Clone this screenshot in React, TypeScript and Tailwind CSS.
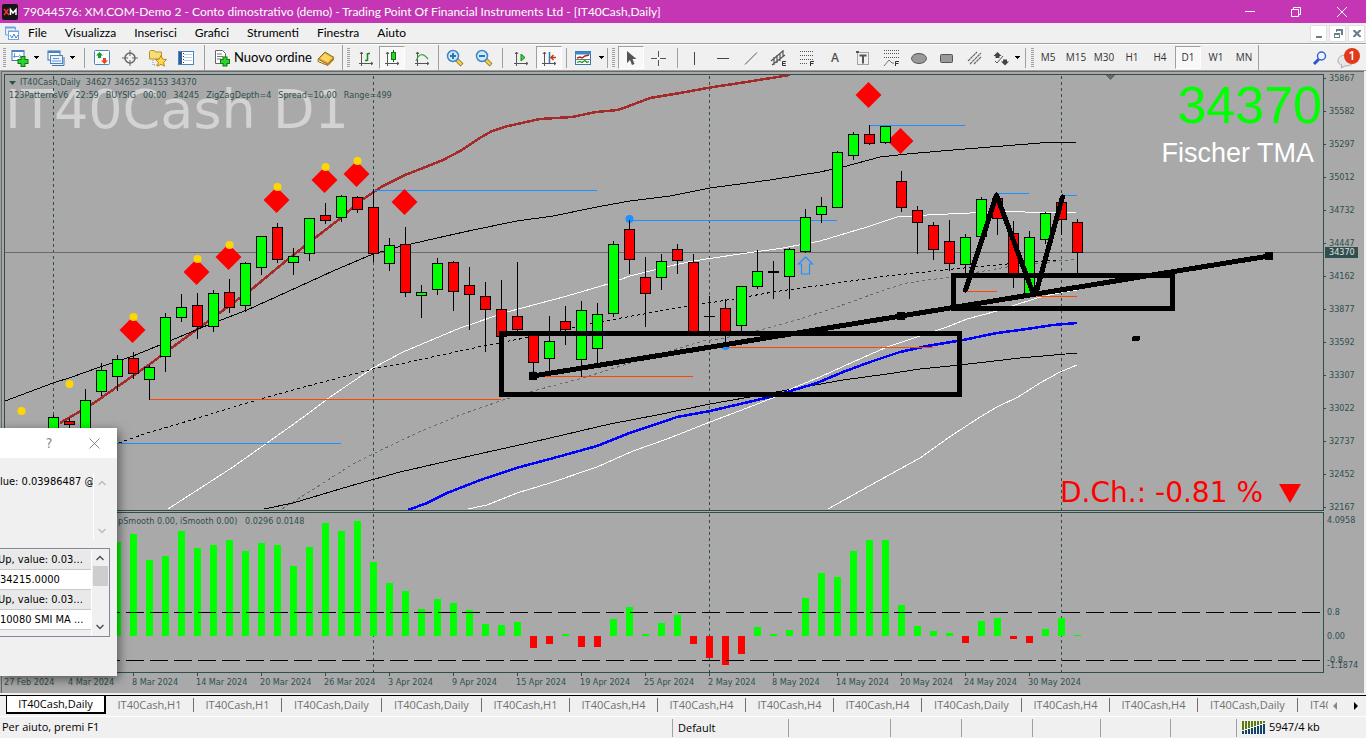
import React from "react";

type Candle = [high: number, top: number, bottom: number, low: number, kind: "g" | "r" | "d"];

const CANDLES: Candle[] = [
  [415, 417, 440, 445, "g"], [418, 421, 424, 428, "r"], [389, 400, 440, 445, "g"],
  [363, 370, 391, 395, "g"], [355, 359, 376, 390, "g"], [352, 358, 373, 378, "r"],
  [365, 367, 379, 399, "g"], [313, 317, 356, 371, "g"], [294, 307, 317, 321, "g"],
  [293, 305, 326, 338, "r"], [290, 293, 326, 331, "g"], [279, 292, 307, 312, "r"],
  [262, 263, 305, 311, "g"], [236, 236, 267, 274, "g"], [223, 227, 259, 262, "r"],
  [248, 256, 262, 274, "g"], [218, 218, 253, 260, "g"], [203, 215, 220, 223, "r"],
  [195, 196, 217, 221, "g"], [196, 197, 209, 212, "r"], [189, 207, 253, 261, "r"],
  [238, 245, 263, 270, "g"], [227, 244, 292, 296, "r"], [285, 292, 295, 317, "g"],
  [258, 263, 289, 294, "g"], [261, 262, 291, 310, "r"], [267, 285, 294, 329, "r"],
  [282, 296, 309, 351, "r"], [280, 309, 336, 336, "r"], [262, 316, 329, 331, "r"],
  [334, 335, 362, 373, "r"], [316, 341, 358, 373, "g"], [306, 321, 329, 344, "r"],
  [301, 310, 359, 376, "g"], [303, 314, 348, 364, "g"], [241, 244, 313, 316, "g"],
  [220, 229, 259, 273, "r"], [257, 277, 293, 326, "r"], [254, 261, 277, 289, "g"],
  [244, 249, 260, 273, "r"], [254, 262, 333, 333, "r"], [296, 316, 316, 331, "d"],
  [299, 308, 332, 346, "r"], [286, 286, 325, 331, "g"], [250, 271, 286, 288, "g"],
  [261, 271, 272, 298, "d"], [248, 249, 276, 298, "g"], [209, 217, 251, 252, "g"],
  [197, 206, 214, 222, "g"], [151, 152, 207, 207, "g"], [132, 134, 155, 159, "g"],
  [125, 134, 143, 144, "r"], [126, 126, 142, 143, "g"], [171, 181, 207, 211, "r"],
  [206, 210, 222, 253, "r"], [222, 225, 249, 259, "r"], [220, 241, 263, 270, "r"],
  [234, 237, 264, 273, "g"], [197, 199, 236, 236, "g"], [195, 198, 218, 234, "r"],
  [221, 233, 273, 287, "r"], [231, 237, 293, 293, "g"], [212, 213, 239, 243, "g"],
  [195, 202, 219, 234, "r"], [219, 222, 252, 273, "r"],
];

// signed bar heights of the oscillator, positive is up
const BARS = [
  90, 90, 90, 92, 94, 102, 76, 80, 105, 88, 91, 96, 85, 93, 91, 70, 89, 113, 105, 115, 74, 53,
  45, 27, 37, 33, 26, 12, 11, 14, -12, -8, 2, -11, -11, 17, 29, 2, 13, 21, -8, -22, -29, -18, 9,
  2, 6, 38, 63, 59, 85, 96, 96, 31, 10, 5, 3, -7, 15, 18, -3, -7, 7, 18, 1,
];

const FIRST_X = 53;
const STEP = 16;
const ZERO_Y = 636;
const GRID_X = [53, 373, 709, 1061];

const CURVES = [
  {
    color: "#a52a2a",
    width: 2.5,
    points:
      "60,423 91,405 127,380 150,364 170,349 203,325 233,303 252,289 287,260 315,238 337,221 363,199 383,186 405,175 423,168 443,160 462,150 478,139 492,131 508,126 540,119 572,117 596,112 618,110 629,106 650,98 680,93 713,87 740,83 790,75",
  },
  {
    color: "#000",
    width: 1,
    points:
      "5,401 53,383 69,378 100,367 133,356 160,345 203,327 247,310 287,292 333,271 373,254 398,247 437,238 473,230 517,221 553,216 597,207 630,201 670,196 710,188 740,184 770,180 820,172 843,167 880,157 907,154 953,150 1003,146 1040,143 1077,142",
  },
  {
    color: "#fff",
    width: 1,
    points:
      "168,509 233,467 267,443 298,421 333,395 373,368 403,352 460,328 507,312 567,296 608,284 630,276 670,266 693,261 740,254 783,248 820,241 867,227 897,217 927,215 970,213 1010,211 1040,213 1077,212",
  },
  {
    color: "#000",
    width: 1,
    dash: "3 3",
    points:
      "119,443 147,433 188,421 250,402 300,388 373,369 400,364 483,346 530,337 570,328 610,320 683,307 740,298 773,292 830,284 887,276 953,269 1007,264 1060,260",
  },
  {
    color: "#696969",
    width: 1,
    dash: "3 3",
    points:
      "282,509 320,485 353,464 377,452 417,433 460,415 503,400 533,391 583,378 630,363 670,351 703,341 720,339 760,330 797,320 837,307 887,289 907,283 950,277 1007,267 1077,259",
  },
  {
    color: "#000",
    width: 1,
    points:
      "264,509 293,503 350,486 400,472 483,453 533,442 610,424 657,415 710,404 750,397 787,390 843,380 887,374 920,369 960,365 1020,358 1077,353",
  },
  {
    color: "#fff",
    width: 1,
    points:
      "468,509 487,505 517,493 550,483 597,467 633,451 667,439 710,422 747,408 775,397 793,388 820,377 853,362 887,347 920,336 947,327 967,319 997,311 1012,306 1037,298 1063,292 1077,290",
  },
  {
    color: "#fff",
    width: 1,
    points: "828,509 853,495 880,480 920,458 948,438 977,419 997,407 1018,397 1040,383 1060,372 1077,365",
  },
  {
    color: "#00f",
    width: 2.5,
    points:
      "408,510 427,503 447,493 483,479 520,467 550,459 597,446 627,434 677,417 710,411 770,397 787,392 817,383 843,372 870,362 900,352 927,346 963,340 997,333 1020,330 1053,325 1077,323",
  },
];

// [x1, x2, y]
const BLUE_LEVELS = [[117, 341, 443], [373, 597, 190], [629, 837, 220], [869, 965, 125], [997, 1029, 193], [1061, 1077, 195]];
const ORANGE_LEVELS = [[149, 501, 399], [533, 693, 376], [725, 933, 347], [965, 997, 291], [1037, 1077, 296]];
const DIAMONDS = [[132, 330], [196, 272], [228, 257], [276, 200], [324, 180], [356, 174], [404, 202], [868, 95], [900, 141]];
const GOLD_DOTS = [[21, 411], [69, 384], [133, 317], [197, 259], [229, 245], [277, 187], [325, 167], [357, 161]];
const BLUE_DOTS = [[629, 219], [725, 346], [533, 375]];

const PRICES = [35867, 35582, 35297, 35012, 34732, 34447, 34162, 33877, 33592, 33307, 33022, 32737, 32452, 32167];
const DATES = [
  "27 Feb 2024", "4 Mar 2024", "8 Mar 2024", "14 Mar 2024", "20 Mar 2024", "26 Mar 2024", "3 Apr 2024", "9 Apr 2024",
  "15 Apr 2024", "19 Apr 2024", "25 Apr 2024", "2 May 2024", "8 May 2024", "14 May 2024", "20 May 2024", "24 May 2024",
  "30 May 2024",
];
const SIGNAL = ["123PatternsV6", "22:59", "BUYSIG", "00:00", "34245", "ZigZagDepth=4", "Spread=10.00", "Range=499"];
const TABS = ["H1", "H1", "Daily", "Daily", "H1", "H4", "H4", "H4", "H4", "Daily", "H4", "H4", "Daily"];

const GridLines = () => (
  <>
    {GRID_X.map((x) => (
      <line key={x} x1={x + 0.5} x2={x + 0.5} y1={76} y2={672} stroke="#2f4f4f" strokeDasharray="3 3" />
    ))}
  </>
);

const PriceChart = () => (
  <svg className="absolute inset-0 h-full w-full" shapeRendering="crispEdges" aria-hidden="true">
    <g transform="translate(-5 -75)">
      <GridLines />
      <line x1={5} x2={1323} y1={252.5} y2={252.5} stroke="#696969" />
      <path d="M1105 75h11l-5.500 5z" fill="#696969" />
      {CURVES.map((c) => (
        <polyline
          key={c.points}
          points={c.points}
          fill="none"
          stroke={c.color}
          strokeWidth={c.width}
          strokeDasharray={c.dash}
        />
      ))}
      {BLUE_LEVELS.map(([x1, x2, y]) => (
        <rect key={x1} x={x1} y={y} width={x2 - x1} height={1} fill="#1e90ff" />
      ))}
      {ORANGE_LEVELS.map(([x1, x2, y]) => (
        <rect key={x1} x={x1} y={y} width={x2 - x1} height={1} fill="#ff4500" />
      ))}
      <g shapeRendering="auto">
        {BLUE_DOTS.map(([x, y]) => (
          <circle key={x} cx={x + 0.5} cy={y} r={4} fill="#1e90ff" />
        ))}
        {DIAMONDS.map(([x, y]) => (
          <path key={x} d={`M${x + 0.5} ${y - 13}l13 13l-13 13l-13 -13z`} fill="#f00" />
        ))}
        {GOLD_DOTS.map(([x, y]) => (
          <circle key={x} cx={x + 0.5} cy={y} r={4} fill="#ffd700" />
        ))}
        <path d="M805.500 257l7 7h-3v10h-8v-10h-3z" fill="none" stroke="#1e90ff" strokeWidth={1.2} />
      </g>
      {CANDLES.map(([high, top, bottom, low, kind], i) => {
        const x = FIRST_X + i * STEP;
        return (
          <g key={x}>
            <rect x={x} y={high} width={1} height={low - high + 1} />
            <rect x={x - 5} y={top} width={11} height={bottom - top + 1} />
            {kind !== "d" && (
              <rect
                x={x - 4}
                y={top + 1}
                width={9}
                height={bottom - top - 1}
                fill={kind === "g" ? "#0f0" : "#f00"}
              />
            )}
          </g>
        );
      })}
      <g fill="none" stroke="#000">
        <rect x={501.5} y={333.5} width={458} height={61} strokeWidth={5} />
        <rect x={953.5} y={275.5} width={219} height={33} strokeWidth={5} />
        <path d="M533 376L1269 256" strokeWidth={5} />
        <path d="M965.500 290L996.500 195L1033 293L1036 293L1062.500 197" strokeWidth={5} strokeLinecap="round" strokeLinejoin="round" />
      </g>
      <rect x={529} y={372} width={8} height={8} />
      <rect x={897} y={312} width={8} height={8} />
      <rect x={1265} y={252} width={8} height={8} />
      <rect x={1132} y={336} width={8} height={5} rx={2} />
    </g>
  </svg>
);

const Oscillator = () => (
  <svg className="absolute inset-0 h-full w-full" shapeRendering="crispEdges" aria-hidden="true">
    <g transform="translate(-5 -513)">
      <GridLines />
      {BARS.map((v, i) => (
        <rect
          key={i}
          x={FIRST_X + i * STEP - 3}
          y={v > 0 ? ZERO_Y - v : ZERO_Y}
          width={7}
          height={Math.abs(v)}
          fill={v > 0 ? "#0f0" : "#f00"}
        />
      ))}
      <line x1={6} x2={1320} y1={612.5} y2={612.5} stroke="#000" strokeDasharray="18 6" />
      <line x1={6} x2={1320} y1={660.5} y2={660.5} stroke="#000" strokeDasharray="18 6" />
    </g>
  </svg>
);

const Icon = ({ children, size = 18 }: { children: React.ReactNode; size?: number }) => (
  <svg width={size} height={size} viewBox={`0 0 ${size} ${size}`} fill="none" aria-hidden="true" className="shrink-0">
    {children}
  </svg>
);

const Tool = ({
  label,
  width = "w-7",
  pressed,
  children,
}: {
  label: string;
  width?: string;
  pressed?: boolean;
  children: React.ReactNode;
}) => (
  <div className={`flex h-full shrink-0 items-center justify-center ${width}`}>
    <button
      type="button"
      aria-label={label}
      aria-pressed={pressed}
      className={
        pressed
          ? "flex h-[23px] w-[26px] items-center justify-center border border-[#a0a0a0] border-r-white border-b-white bg-[#f8f8f8]"
          : "flex h-[23px] items-center justify-center"
      }
    >
      {children}
    </button>
  </div>
);

const Caret = ({ label }: { label: string }) => (
  <button type="button" aria-label={label} className="flex w-2 shrink-0 items-center justify-center">
    <svg width="5" height="3" shapeRendering="crispEdges" aria-hidden="true">
      <path d="M0 0h5L2.500 3z" fill="#000" />
    </svg>
  </button>
);

const Sep = ({ width }: { width: string }) => (
  <div className={`flex h-full shrink-0 items-center justify-center ${width}`}>
    <span className="h-5 w-px bg-[#a0a0a0]" />
  </div>
);

const Edge = () => <div className="h-full w-px shrink-0 bg-[#a0a0a0]" />;

const Grip = ({ width }: { width: string }) => (
  <div className={`flex h-full shrink-0 items-center justify-center ${width}`}>
    <svg width="3" height="19" shapeRendering="crispEdges" aria-hidden="true">
      <path d="M1.500 0v19" stroke="#a0a0a0" strokeWidth="3" strokeDasharray="1 1" />
    </svg>
  </div>
);

const Axes = () => <path d="M4.500 3v14M2 14.500h14M3 5l1.500-2L6 5M14 13l2 1.500-2 1.500" stroke="#555" />;

const Magnifier = ({ plus }: { plus?: boolean }) => (
  <Icon>
    <path d="M10.500 10.500l5.500 5.500" stroke="#8a6d1a" strokeWidth="4" />
    <path d="M10.500 10.500l5 5" stroke="#f3cf4a" strokeWidth="2.500" />
    <circle cx="7" cy="7" r="5.500" fill="#cfe9fb" stroke="#3f86c4" strokeWidth="1.500" />
    <path d={plus ? "M4 7h6M7 4v6" : "M4 7h6"} stroke="#2f75b5" strokeWidth="2" />
  </Icon>
);

const Toolbar = () => (
  <div role="toolbar" className="flex h-[26px] items-center overflow-hidden border-t border-white bg-[#f0f0f0]">
    <Grip width="w-2" />
    <Tool label="Nuovo grafico" width="w-6">
      <Icon>
        <rect x="1" y="1.500" width="12" height="10" fill="#fff" stroke="#3f74ad" />
        <path d="M1 2h12" stroke="#4a83bd" strokeWidth="2" />
        <path d="M3.500 4v5M2 7.500h6M8 6l2 1.500L8 9" stroke="#6b9bd0" />
        <path d="M12 7v11M6.500 12.500h11" stroke="#0a7a12" strokeWidth="5" />
        <path d="M12 8v9M7.500 12.500h9" stroke="#2fd02f" strokeWidth="3" />
      </Icon>
    </Tool>
    <Caret label="Altri grafici" />
    <div className="w-1 shrink-0" />
    <Tool label="Profili" width="w-6">
      <Icon>
        <rect x="1" y="2" width="12" height="9" fill="#fff" stroke="#3f74ad" />
        <path d="M1 3h12" stroke="#4a83bd" strokeWidth="2" />
        <path d="M5 16.500h12V8" stroke="#3f74ad" />
        <rect x="3.500" y="6.500" width="12" height="8" fill="#eaf3fc" stroke="#4a83bd" />
        <path d="M5 12h9M6 9.500h6" stroke="#6b9bd0" />
      </Icon>
    </Tool>
    <Caret label="Elenco profili" />
    <Sep width="w-4" />
    <Tool label="Market Watch" width="w-5">
      <Icon>
        <rect x="1.500" y="1.500" width="15" height="14" rx="1" fill="#fff" stroke="#4a83bd" />
        <path d="M4 5h10M4 9h10M4 13h10" stroke="#c5dcf2" strokeDasharray="1 1" />
        <path d="M6.500 3l3.500 3.500H8V9H5V6.500H3z" fill="#169a22" />
        <path d="M11.500 15l3.500-3.500h-2V9h-3v2.500H8z" fill="#e5481c" />
      </Icon>
    </Tool>
    <Tool label="Finestra dati" width="w-9">
      <Icon>
        <circle cx="9" cy="9" r="5" stroke="#666" strokeWidth="1.500" />
        <path d="M9 1v6M9 11v6M1 9h6M11 9h6" stroke="#666" />
      </Icon>
    </Tool>
    <Tool label="Navigatore" width="w-5">
      <Icon>
        <path d="M.5 10V2.500l1-1h4l1 1.500h6V10z" fill="#f7dc7a" stroke="#b99325" />
        <path d="M4 11v5h4" stroke="#888" strokeDasharray="1 1" />
        <path d="M12 6.500l1.700 3.600 3.800.5-2.800 2.700.7 3.900-3.400-1.900-3.400 1.900.7-3.900-2.800-2.700 3.800-.5z" fill="#ffd84d" stroke="#b98a12" />
      </Icon>
    </Tool>
    <Tool label="Terminale" width="w-9">
      <Icon>
        <rect x="1.500" y="2.500" width="15" height="13" fill="#fff" stroke="#4a83bd" />
        <path d="M3.500 3v12" stroke="#2c5d94" strokeWidth="3" />
        <path d="M7 5.500h8M7 8.500h8M7 11.500h8" stroke="#b5d0ea" />
        <path d="M6.500 4v10" stroke="#333" strokeDasharray="1 2" />
      </Icon>
    </Tool>
    <Edge />
    <button type="button" className="flex h-full w-[105px] shrink-0 items-center gap-[3px] pl-2 font-['Lato','Open_Sans',sans-serif] text-[13px] whitespace-nowrap text-black">
      <Icon>
        <path d="M2.500 1.500h7l3 3v10h-10z" fill="#fff" stroke="#666" />
        <path d="M4 5h5M4 7.500h6M4 10h4" stroke="#777" />
        <path d="M12 7.500v10M7 12.500h10" stroke="#0a7a12" strokeWidth="5" />
        <path d="M12 8.500v8M8 12.500h8" stroke="#2fd02f" strokeWidth="3" />
      </Icon>
      Nuovo ordine
    </button>
    <Tool label="MetaEditor" width="w-8">
      <Icon>
        <path d="M1 10l7-7 9 5.500-6 7z" fill="#e2a526" stroke="#9a6a10" />
        <path d="M3 9.500L8 4.500l7 4.300-4 4.500z" fill="#f8d568" />
        <path d="M1 10.500v2l10 4 6-6.500" stroke="#9a6a10" />
      </Icon>
    </Tool>
    <Edge />
    <Grip width="w-[11px]" />
    <Tool label="Grafico a barre" width="w-6">
      <Icon>
        <Axes />
        <path d="M10.500 4v8M8 11.500h2M11 4.500h2" stroke="#128a1c" strokeWidth="1.500" />
      </Icon>
    </Tool>
    <Tool label="Candele giapponesi" pressed>
      <Icon>
        <Axes />
        <path d="M10.500 1v12" stroke="#0a6a12" />
        <rect x="8.500" y="3.500" width="4" height="7" fill="#2fd02f" stroke="#0a7a12" />
      </Icon>
    </Tool>
    <Tool label="Grafico a linea" width="w-8">
      <Icon>
        <Axes />
        <path d="M3 12c3-8 7-8 12-2" stroke="#3aa845" strokeWidth="1.200" />
      </Icon>
    </Tool>
    <Edge />
    <Tool label="Ingrandisci" width="w-8">
      <Magnifier plus />
    </Tool>
    <Tool label="Riduci" width="w-[25px]">
      <Magnifier />
    </Tool>
    <Sep width="w-3" />
    <Tool label="Scorrimento automatico" width="w-[26px]">
      <Icon>
        <Axes />
        <path d="M9 5l4 3.500L9 12z" fill="#3fd04a" stroke="#128a1c" />
      </Icon>
    </Tool>
    <Tool label="Spostamento grafico" width="w-[29px]" pressed>
      <Icon>
        <Axes />
        <path d="M9.500 3v11" stroke="#2f75b5" strokeWidth="1.500" />
        <path d="M11 8.500h5M13.500 6L11 8.500l2.500 2.500" stroke="#c23a12" strokeWidth="1.500" />
      </Icon>
    </Tool>
    <Sep width="w-1.5" />
    <Tool label="Modelli" width="w-7">
      <Icon>
        <rect x="1.500" y="2.500" width="15" height="13" fill="#fff" stroke="#3f74ad" />
        <path d="M1 4h16" stroke="#3f86c4" strokeWidth="3" />
        <path d="M3 9l3-1 2 1 3-2 4-1" stroke="#a03018" strokeWidth="1.500" />
        <path d="M3 13.500l3-1 2 1 3-2 2 2 2-1" stroke="#169a22" strokeWidth="1.200" />
        <path d="M2 10.500h14" stroke="#777" />
      </Icon>
    </Tool>
    <Caret label="Elenco modelli" />
    <Sep width="w-[5px]" />
    <Grip width="w-[7px]" />
    <Tool label="Cursore" pressed>
      <Icon>
        <path d="M5 2v12l3-3 2 5 2.500-1-2-5h4z" fill="#555" />
      </Icon>
    </Tool>
    <Tool label="Mirino">
      <Icon>
        <path d="M8.500 2v6M8.500 11v6M1 9.500h6M10 9.500h6" stroke="#555" />
      </Icon>
    </Tool>
    <Sep width="w-2" />
    <Tool label="Linea verticale">
      <Icon>
        <path d="M8.500 3v13" stroke="#444" />
      </Icon>
    </Tool>
    <Tool label="Linea orizzontale">
      <Icon>
        <path d="M3 9.500h12" stroke="#444" />
      </Icon>
    </Tool>
    <Tool label="Trendline">
      <Icon>
        <path d="M3 15.500L15 3.500" stroke="#555" />
      </Icon>
    </Tool>
    <Tool label="Canale equidistante">
      <Icon>
        <path d="M1 12L13 2M2 16L15 6M4 8v8M7 6v8M10 4v8M13 1v7" stroke="#555" strokeWidth="1.200" />
        <path d="M16 12.500h-3.500v4H16M12.500 14.500h3" stroke="#333" />
      </Icon>
    </Tool>
    <Tool label="Fibonacci">
      <Icon>
        <path d="M2 2.500h14M2 6.500h14M2 10.500h14M2 14.500h8" stroke="#555" strokeDasharray="1 1" />
        <path d="M12.500 17v-4.500H16M12.500 14.500h3" stroke="#333" />
      </Icon>
    </Tool>
    <Tool label="Testo">
      <span className="text-[12px] font-semibold text-[#555]">A</span>
    </Tool>
    <Tool label="Etichetta">
      <Icon>
        <rect x="3.500" y="3.500" width="11" height="12" stroke="#555" strokeDasharray="1 1" />
        <path d="M5.500 6.500h7M9 6.500v8" stroke="#555" strokeWidth="2" />
        <path d="M2 2h3v2H2z" fill="#555" />
      </Icon>
    </Tool>
    <Tool label="Espansione Fibonacci">
      <Icon>
        <path d="M2 1.500h15M2 4.500h15M2 8.500h15" stroke="#555" strokeDasharray="1 1" />
        <path d="M2 17l5-6 3 3h2" stroke="#777" />
        <path d="M13.500 17v-4.500H17M13.500 14.500h3" stroke="#333" />
      </Icon>
    </Tool>
    <Tool label="Ellisse">
      <Icon>
        <ellipse cx="9" cy="9.500" rx="7.500" ry="5" fill="#999" stroke="#555" />
      </Icon>
    </Tool>
    <Tool label="Rettangolo">
      <Icon>
        <rect x="2.500" y="5.500" width="12" height="8" rx="1" fill="#999" stroke="#555" />
      </Icon>
    </Tool>
    <Tool label="Canale">
      <Icon>
        <path d="M2 12L11 3M4 15L15 4M8 15l7-7" stroke="#666" strokeWidth="1.200" strokeDasharray="3 .5" />
      </Icon>
    </Tool>
    <Tool label="Frecce" width="w-6">
      <Icon>
        <path d="M5.500 3l4 4h-2v2h-4V7h-2zM13 16.500l-4-4h2v-2h4v2h2z" fill="#444" />
        <path d="M3 12l2 2 6-7" stroke="#555" />
      </Icon>
    </Tool>
    <Caret label="Elenco frecce" />
    <Sep width="w-[9px]" />
    <Grip width="w-1" />
    {["M5", "M15", "M30", "H1", "H4", "D1", "W1", "MN"].map((tf) => (
      <Tool key={tf} label={tf} pressed={tf === "D1"}>
        <span className="text-[10px] text-[#333]">{tf}</span>
      </Tool>
    ))}
    <Edge />
    <button type="button" aria-label="Cerca" className="ml-auto shrink-0 pr-2">
      <Icon size={16}>
        <path d="M7 9l-5 5" stroke="#2f55c4" strokeWidth="3" />
        <circle cx="9.500" cy="6" r="4" fill="#eef5ff" stroke="#3a66d0" strokeWidth="1.500" />
      </Icon>
    </button>
    <button type="button" aria-label="Notifiche" className="relative mr-1.5 h-6 w-6 shrink-0">
      <svg width="24" height="24" aria-hidden="true">
        <path d="M2 15c0-4 3-6 8-6s8 3 8 6-4 5-9 5l-4 2 1-3c-3-1-4-2-4-4z" fill="#e4e4ea" stroke="#aaa" />
        <circle cx="16" cy="10" r="8" fill="#e03a1c" />
      </svg>
      <span className="absolute top-0.5 left-3 w-2 text-center text-[12px] leading-4 font-semibold text-white">1</span>
    </button>
  </div>
);

const TitleBar = () => (
  <header className="flex h-[23px] items-center bg-[#c436b3] font-['Lato','Open_Sans',sans-serif] text-[12px] text-white">
    <svg width="16" height="16" className="ml-0.5 shrink-0" aria-hidden="true">
      <rect width="16" height="16" rx="2" fill="#151515" />
      <path d="M2 5l5 6M6.500 5L2 11" stroke="#e33" strokeWidth="1.500" />
      <path d="M8.500 11V5.500L11 9l3-3.500V11" fill="none" stroke="#fff" strokeWidth="1.500" />
    </svg>
    <h1 className="ml-[5px] truncate">
      79044576: XM.COM-Demo 2 - Conto dimostrativo (demo) - Trading Point Of Financial Instruments Ltd - [IT40Cash,Daily]
    </h1>
    <div className="ml-auto flex shrink-0 pr-px">
      <button type="button" aria-label="Riduci a icona" className="flex h-[23px] w-[46px] items-center justify-center">
        <svg width="10" height="10"><path d="M0 4.500h10" stroke="#fff" /></svg>
      </button>
      <button type="button" aria-label="Ripristina" className="flex h-[23px] w-[46px] items-center justify-center">
        <svg width="10" height="10" fill="none" stroke="#fff"><path d="M.5 2.500h7v7h-7zM2.500 2.500v-2h7v7h-2" /></svg>
      </button>
      <button type="button" aria-label="Chiudi" className="flex h-[23px] w-[46px] items-center justify-center">
        <svg width="10" height="10"><path d="M0 0l10 10M10 0L0 10" stroke="#fff" /></svg>
      </button>
    </div>
  </header>
);

const MENU = ["File", "Visualizza", "Inserisci", "Grafici", "Strumenti", "Finestra", "Aiuto"];

const MenuBar = () => (
  <nav className="flex h-[21px] items-center border-b border-[#a0a0a0] font-['Lato','Open_Sans',sans-serif] text-[12px] text-black">
    <svg width="16" height="16" className="mr-2 ml-1 shrink-0" fill="none" aria-hidden="true">
      <path d="M1 2.500h10M4 6.500h11" stroke="#6da3e0" strokeWidth="2" />
      <path d="M1.500 2v8H4M11.500 2v3" stroke="#6da3e0" />
      <rect x="4.500" y="6.500" width="10" height="8" fill="#fff" stroke="#6da3e0" />
      <path d="M6 10l2 3 2-4 2 4 2-3" stroke="#3f86c4" />
    </svg>
    <div className="flex gap-[18px]">
      {MENU.map((item) => (
        <button key={item} type="button">
          {item}
        </button>
      ))}
    </div>
    <div className="mr-px ml-auto flex gap-0.5">
      {[
        ["Riduci grafico", "M2 8h6v2H2z"],
        ["Ripristina grafico", "M3 1h7v6H8V3H4v1H3zM1 5h6v5H1zM2 7v2h4V7z"],
        ["Chiudi grafico", "M1 2h2l2 2 2-2h2v1L6.500 5.500 9 8v1H7L5 7 3 9H1V8l2.500-2.500L1 3z"],
      ].map(([label, d]) => (
        <button
          key={label}
          type="button"
          aria-label={label}
          className="flex size-[17px] items-center justify-center border border-[#e0e0e0] bg-white"
        >
          <svg width="10" height="10"><path d={d} fill="#6a7f8c" fillRule="evenodd" /></svg>
        </button>
      ))}
    </div>
  </nav>
);

const Chevron = ({ up, color }: { up?: boolean; color: string }) => (
  <svg width="8" height="6" fill="none" aria-hidden="true">
    <path d={up ? "M.5 5L4 1.500 7.500 5" : "M.5 1L4 4.500 7.500 1"} stroke={color} strokeWidth="1.500" />
  </svg>
);

const DataDialog = () => (
  <section
    role="dialog"
    aria-label="Valori"
    className="absolute top-[357px] -left-px h-[248px] w-[117px] bg-[#f0f0f0] text-[11px] text-black shadow-[2px_3px_10px_rgba(0,0,0,0.5)]"
  >
    <div className="flex h-[30px] items-center bg-white pl-[45px] text-[#888]">
      <button type="button" aria-label="Aiuto" className="w-2 text-[14px]">?</button>
      <button type="button" aria-label="Chiudi" className="ml-9">
        <svg width="11" height="11"><path d="M.5.5l10 10M10.500.5l-10 10" stroke="#888" /></svg>
      </button>
    </div>
    <div className="flex h-[90px] pt-4">
      <p className="h-4 w-[93px] whitespace-nowrap leading-4">lue: 0.03986487 @</p>
      <div className="flex h-[66px] w-4 flex-col items-center justify-between border-l border-white py-1.5">
        <Chevron up color="#bbb" />
        <Chevron color="#bbb" />
      </div>
    </div>
    <div className="flex h-[89px] w-[110px] border border-l-0 border-[#82879a] bg-[#f0f0f0] pt-px">
      <ul className="w-[91px] overflow-hidden whitespace-nowrap">
        <li className="-ml-0.5 h-5 border-b border-[#c8c8c8] bg-[#e9e9e9] leading-5">Up, value: 0.03...</li>
        <li className="h-5 border-b border-[#c8c8c8] bg-white leading-5">34215.0000</li>
        <li className="-ml-0.5 h-5 border-b border-[#c8c8c8] bg-[#e9e9e9] leading-5">Up, value: 0.03...</li>
        <li className="h-5 border-b border-[#c8c8c8] bg-white leading-5">10080 SMI MA ...</li>
      </ul>
      <div className="flex w-[17px] flex-col items-center border-l border-white pb-1.5">
        <span className="flex h-4 items-center"><Chevron up color="#505050" /></span>
        <span className="h-5 w-[15px] bg-[#cdcdcd]" />
        <span className="mt-auto flex"><Chevron color="#505050" /></span>
      </div>
    </div>
  </section>
);

const ChartWindow = () => (
  <main className="relative flex border-t border-l border-[#a0a0a0] bg-[#f0f0f0] font-['DejaVu_Sans_Condensed','DejaVu_Sans',sans-serif] text-[9px] text-[#2f4f4f]">
    <div className="flex min-w-0 flex-1 border-t border-l border-[#696969] bg-[#a9a9a9] pt-0.5 pl-0.5">
      <div className="min-w-0 flex-1">
        <div className="relative h-[437px] overflow-hidden border border-[#2f4f4f]">
          <p className="absolute top-[3px] left-0 font-['DejaVu_Sans'] text-[54px] leading-[64px] whitespace-nowrap text-[#d3d3d3]">
            IT40Cash D1
          </p>
          <PriceChart />
          <div className="relative pt-px pl-1 leading-[13px] whitespace-pre">
            <p className="flex items-center gap-1">
              <svg width="7" height="4" aria-hidden="true"><path d="M0 0h7L3.500 4z" fill="#2f4f4f" /></svg>
              IT40Cash,Daily{"  "}34627 34652 34153 34370
            </p>
            <p className="flex gap-[7px]">
              {SIGNAL.map((part) => (
                <span key={part}>{part}</span>
              ))}
            </p>
          </div>
          <p className="absolute top-0 right-px font-['Liberation_Sans'] text-[52px] leading-[60px] text-[#0f0]">34370</p>
          <p className="absolute top-[62px] right-[9px] font-['Liberation_Sans'] text-[27px] leading-[32px] text-white">Fischer TMA</p>
          <p className="absolute right-[22px] bottom-px flex items-center gap-4 font-['DejaVu_Sans'] text-[28px] leading-[32px] text-[#f00]">
            D.Ch.: -0.81 %
            <svg width="22" height="19" aria-hidden="true"><path d="M0 0h22L11 19z" fill="#f00" /></svg>
          </p>
        </div>
        <div className="relative mt-px h-[161px] overflow-hidden border border-[#2f4f4f]">
          <Oscillator />
          <p className="relative pl-[113px] leading-4 whitespace-pre">pSmooth 0.00, iSmooth 0.00){"   "}0.0296 0.0148</p>
        </div>
        <div className="flex h-5 overflow-hidden">
          {DATES.map((date) => (
            <div key={date} className="w-16 shrink-0 whitespace-nowrap">
              <div className="ml-px h-[3px] w-px bg-[#2f4f4f]" />
              <div className="leading-3">{date}</div>
            </div>
          ))}
        </div>
      </div>
      <div className="relative -mt-[4px] w-10 shrink-0 leading-4">
        <div className="h-[442px] overflow-hidden">
          {PRICES.map((price) => (
            <div key={price} className="flex h-[33px] items-start gap-[3px]">
              <span className="mt-2 h-px w-0.5 bg-[#2f4f4f]" />
              {price}
            </div>
          ))}
        </div>
        <span className="absolute top-[177px] left-px w-[33px] bg-[#2f4f4f] pl-1 leading-[11px] text-[#e0e0e0]">34370</span>
        <div className="pl-[3px]">
          <div className="h-[92px]">4.0958</div>
          <div className="h-6">0.8</div>
          <div className="h-6">0.00</div>
          <div className="h-[5px]">-0.8</div>
          <div className="h-4">-1.1874</div>
        </div>
      </div>
    </div>
    <div className="w-0.5 shrink-0 bg-[#f0f0f0]" />
    <DataDialog />
  </main>
);

const TabBar = () => (
  <div className="mt-0.5 flex h-[21px] overflow-hidden border-t border-black text-[11px] text-[#707070]">
    <div className="w-1.5 shrink-0" />
    <div role="tablist" className="flex min-w-0 flex-1 overflow-hidden">
      <button
        role="tab"
        aria-selected="true"
        type="button"
        className="h-[18px] w-[100px] shrink-0 border-r-2 border-b-2 border-l border-black bg-white text-black"
      >
        IT40Cash,Daily
      </button>
      {TABS.map((period, i) => (
        <button
          key={i}
          role="tab"
          aria-selected="false"
          type="button"
          className={`flex h-[18px] shrink-0 items-center justify-center ${period === "Daily" ? "w-[100px]" : "w-[88px]"}`}
        >
          <span className="flex-1">IT40Cash,{period}</span>
          <span className="h-3.5 w-px bg-[#707070]" />
        </button>
      ))}
      <button role="tab" aria-selected="false" type="button" className="h-[18px] w-[100px] shrink-0 pl-3 text-left">
        IT40Cash,H4
      </button>
    </div>
    <div className="flex w-[38px] shrink-0 items-center justify-between pr-2 pl-[5px]">
      <button type="button" aria-label="Schede precedenti">
        <svg width="4" height="8"><path d="M4 0v8L0 4z" fill="#888" /></svg>
      </button>
      <button type="button" aria-label="Schede successive">
        <svg width="4" height="8"><path d="M0 0v8l4-4z" fill="#000" /></svg>
      </button>
    </div>
  </div>
);

const StatusBar = () => (
  <footer className="flex h-[22px] items-center border-t border-white text-[11px] text-black">
    <span className="flex-1 pl-0.5">Per aiuto, premi F1</span>
    <span className="h-[18px] w-[116px] border-l border-[#a0a0a0] pl-[5px] leading-[18px]">Default</span>
    <span className="h-[18px] w-[102px] border-l border-[#a0a0a0]" />
    <span className="h-[18px] w-[71px] border-l border-[#a0a0a0]" />
    <span className="h-[18px] w-[71px] border-l border-[#a0a0a0]" />
    <span className="h-[18px] w-[68px] border-l border-[#a0a0a0]" />
    <span className="h-[18px] w-[70px] border-l border-[#a0a0a0]" />
    <span className="h-[18px] w-[66px] border-l border-[#a0a0a0]" />
    <span className="flex h-[18px] w-[130px] items-center gap-1 border-l border-[#a0a0a0] pl-[5px]">
      <svg width="23" height="13" shapeRendering="crispEdges" aria-hidden="true">
        {[0, 1, 2, 3, 4, 5, 6, 7].map((i) => (
          <g key={i}>
            <rect x={i * 3} y={0} width={2} height={9 - i} fill="#5f7a0c" />
            <rect x={i * 3} y={10 - i} width={2} height={3 + i} fill="#0f4468" />
          </g>
        ))}
      </svg>
      5947/4 kb
    </span>
  </footer>
);

const App = () => {
  return (
    <div className="flex min-h-screen flex-col overflow-hidden bg-[#f0f0f0] font-['Open_Sans','Noto_Sans',sans-serif]">
      <TitleBar />
      <MenuBar />
      <Toolbar />
      <ChartWindow />
      <TabBar />
      <StatusBar />
    </div>
  );
};

export default App;
